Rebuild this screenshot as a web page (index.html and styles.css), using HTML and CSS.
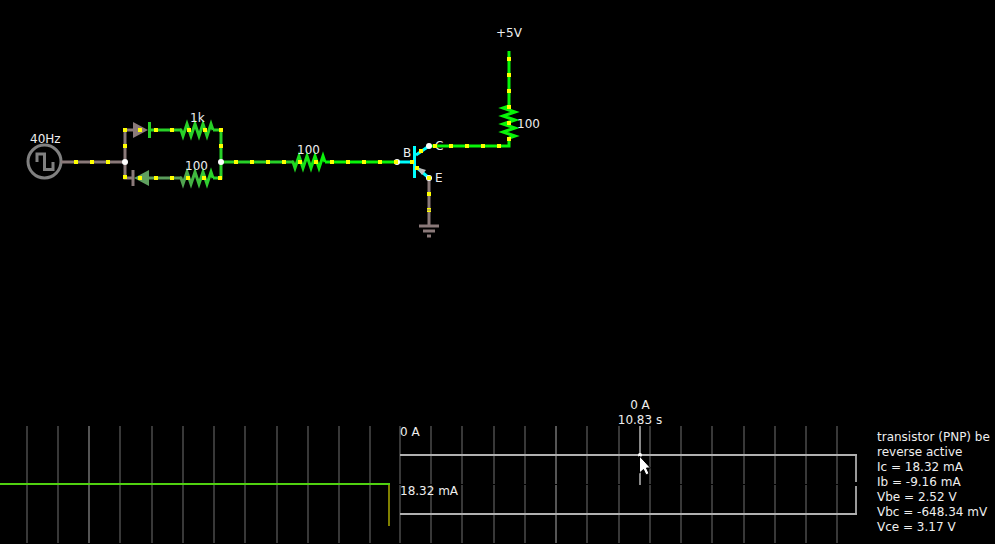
FILE: index.html
```html
<!DOCTYPE html>
<html lang="en">
<head>
<meta charset="utf-8">
<title>Circuit Simulator</title>
<link rel="stylesheet" href="styles.css">
</head>
<body>
<main class="simulator">
  <svg class="circuit" viewBox="0 0 995 426" role="img" aria-label="Transistor circuit">
    <defs>
      <linearGradient id="lower-drop" gradientUnits="userSpaceOnUse" x1="181" y1="0" x2="213" y2="0">
        <stop offset="0" stop-color="#52a052"/>
        <stop offset="1" stop-color="#28d828"/>
      </linearGradient>
      <linearGradient id="base-drop" gradientUnits="userSpaceOnUse" x1="293" y1="0" x2="325" y2="0">
        <stop offset="0" stop-color="#22d822"/>
        <stop offset="1" stop-color="#08f408"/>
      </linearGradient>
    </defs>

    <!-- square wave source -->
    <circle class="source" cx="44.5" cy="161.5" r="16.5"/>
    <path class="source" d="M37 162V154H44.500V169.500H53V162"/>
    <text x="435" y="150">C</text>

    <!-- wires -->
    <path class="wire ground" d="M61 162H125M133 130H125V178H133M429 178V226"/>
    <path class="wire ground" d="M419 226H439M423 231H435M427 236H431"/>
    <path class="wire mid" d="M149 130H181M213 130H221V178H213M221 162H293"/>
    <path class="wire low" d="M149 178H181"/>
    <path class="wire high" d="M325 162H397M429 146H509V138M509 51V106"/>

    <!-- diodes -->
    <path class="fill-ground" d="M133 122L148 130L133 138Z"/>
    <path class="wire mid" d="M149.500 122V138"/>
    <path class="fill-low" d="M149 170L134 178L149 186Z"/>
    <path class="wire ground" d="M133 170V186"/>

    <!-- resistors -->
    <path class="wire mid" d="M180 130H181L183 136L187 124L191 136L195 124L199 136L203 124L207 136L211 124L213 130"/>
    <path class="wire lower-resistor" d="M180 178H181L183 184L187 172L191 184L195 172L199 184L203 172L207 184L211 172L213 178"/>
    <path class="wire base-resistor" d="M292 162H293L295 168L299 156L303 168L307 156L311 168L315 156L319 168L323 156L325 162"/>
    <path class="wire high" d="M509 105V106L503 108L515 112L503 116L515 120L503 124L515 128L503 132L515 136L509 138"/>

    <!-- transistor -->
    <path class="wire selected" d="M397 162H413M414.500 146V178M416 155L429 146M416 167L429 178"/>
    <path class="arrow" d="M416 167L426 170L422 175Z"/>

    <g class="node">
      <circle cx="125" cy="162" r="3"/>
      <circle cx="221" cy="162" r="3"/>
      <circle cx="397" cy="162" r="3"/>
      <circle cx="429" cy="146" r="3"/>
      <circle cx="429" cy="178" r="3"/>
    </g>

    <!-- moving charges -->
    <path class="charge" d="M74 162h4m12 0h4m12 0h4"/>
    <path class="charge" d="M123 130h4m-4 16h4m-4 31h4"/>
    <path class="charge" d="M138 130h4m12 0h4m12 0h4m13 0h4m12 0h4m12 0h4"/>
    <path class="charge" d="M138 178h4m12 0h4m12 0h4m12 0h4m12 0h4m12 0h4M219 146h4"/>
    <path class="charge" d="M234 162h4m12 0h4m12 0h4m12 0h4m12 0h4m12 0h4m12 0h4m12 0h4m12 0h4m12 0h4m12 0h4"/>
    <path class="charge" d="M410 162h4M419 151h4M415 168h4M427 178h4M427 194h4M427 210h4"/>
    <path class="charge" d="M433 146h4m12 0h4m12 0h4m12 0h4m12 0h4"/>
    <path class="charge" d="M507 59h4m-4 16h4m-4 16h4m-4 16h4m-4 16h4m-4 16h4"/>
    <path class="charge-seam" d="M427 210H431"/>

    <text x="30" y="143">40Hz</text>
    <text x="190" y="122">1k</text>
    <text x="185" y="170">100</text>
    <text x="297" y="154">100</text>
    <text x="403" y="157">B</text>
    <text x="435" y="182">E</text>
    <text x="496" y="37">+5V</text>
    <text x="517" y="128">100</text>
  </svg>

  <section class="scopes" aria-label="Scopes">
    <svg class="scope" viewBox="0 426 400 118">
      <path class="grid" d="M27 426v117M58 426v117M120 426v117M152 426v117M183 426v117M214 426v117M245 426v117M277 426v117M308 426v117M339 426v117M370 426v117"/>
      <path class="grid major" d="M89 426v117"/>
      <path class="voltage" d="M0 484H390"/>
      <path class="current" d="M389 485V526"/>
    </svg>
    <svg class="scope" viewBox="400 426 477 118">
      <path class="grid" d="M400 426v117M431 426v117M462 426v117M494 426v117M525 426v117M587 426v117M619 426v117M650 426v117M681 426v117M712 426v117M744 426v117M775 426v117M806 426v117M837 426v117"/>
      <path class="grid major" d="M556 426v117"/>
      <path class="divider" d="M399 484.500H855"/>
      <path class="trace" d="M400 455H857M400 514H857"/>
      <path class="trace edge" d="M856 456V482M856 486V513"/>
      <path class="marker" d="M640 426V485"/>
      <circle class="marker-dot" cx="640" cy="455" r="2"/>
      <path class="pointer" d="M639.500 456V473L643.500 469.500L646 475L649 473.500L646.500 468H650.500Z"/>
      <text x="400" y="436">0 A</text>
      <text x="400" y="495">18.32 mA</text>
      <text class="centered" x="640" y="409">0 A</text>
      <text class="centered" x="640" y="424">10.83 s</text>
    </svg>
    <ul class="info">
      <li>transistor (PNP) be</li>
      <li>reverse active</li>
      <li>Ic = 18.32 mA</li>
      <li>Ib = -9.16 mA</li>
      <li>Vbe = 2.52 V</li>
      <li>Vbc = -648.34 mV</li>
      <li>Vce = 3.17 V</li>
    </ul>
  </section>
</main>
</body>
</html>
```
FILE: styles.css
```css
body {
  margin: 0;
  background: #000;
  color: #eee;
  font: 12px/15px "DejaVu Sans", sans-serif;
}

.simulator {
  overflow: hidden;
}

svg {
  display: block;
  width: 100%;
  height: auto;
  fill: none;
}

text {
  fill: #eee;
  font-size: 12px;
}

.centered { text-anchor: middle; }

.source {
  stroke: #808080;
  stroke-width: 3;
}

.wire {
  stroke-width: 3;
  stroke-linejoin: miter;
}

.ground { stroke: #8a7979; }
.mid { stroke: #28d028; }
.low { stroke: #5a9c5a; }
.high { stroke: #08f408; }
.selected { stroke: #0ff; }
.lower-resistor { stroke: url(#lower-drop); }
.base-resistor { stroke: url(#base-drop); }
.fill-ground { fill: #8a7979; }
.fill-low { fill: #5fa05f; }
.arrow { fill: #c0c0c0; }
.node { fill: #fff; }

.charge {
  stroke: #ff0;
  stroke-width: 4;
}

.charge-seam {
  stroke: #8a7979;
  stroke-width: 1;
}

.scopes {
  display: grid;
  grid-template-columns: 400fr 477fr 118fr;
}

.scope { overflow: visible; }

.grid {
  stroke: #383838;
  stroke-width: 2;
}

.major { stroke: #555; }

.divider { stroke: #000; }

.voltage {
  stroke: #50d010;
  stroke-width: 2;
}

.current {
  stroke: #808000;
  stroke-width: 2;
}

.trace {
  stroke: #b0b0b0;
  stroke-width: 2;
}

.edge { stroke: #999; }

.marker {
  stroke: #888;
  stroke-width: 2;
}

.marker-dot { fill: #fff; }

.pointer {
  fill: #fff;
  stroke: #000;
}

.info {
  min-width: 0;
  margin: 0;
  padding: 4px 0 0;
  list-style: none;
  white-space: nowrap;
}
```
